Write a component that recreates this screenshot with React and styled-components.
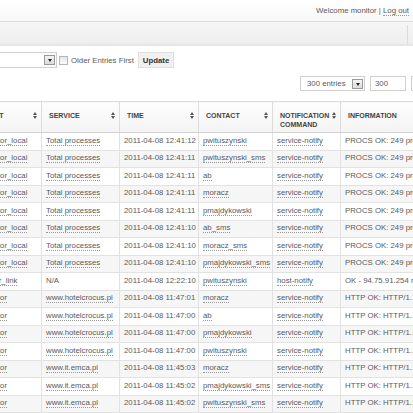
import React from 'react';
import styled, { createGlobalStyle } from 'styled-components';

const GlobalStyle = createGlobalStyle`
    html, body {
        margin: 0;
        padding: 0;
        background: #fff;
        overflow: hidden;
    }
    body {
        font-family: "Liberation Sans", Arial, sans-serif;
        font-size: 7.8px;
        color: #5a5a5a;
    }
`

const Page = styled.div`
    width: 413px;
    height: 413px;
    overflow: hidden;
    display: flex;
    flex-direction: column;
`
const TopBar = styled.div`
    height: 21px;
    flex-shrink: 0;
    display: flex;
    align-items: center;
    justify-content: flex-end;
    padding-right: 4px;
    background: linear-gradient(#fff, #f8f8f8);
    border-bottom: 1px solid #dcdcdc;
`
const NavBar = styled.div`
    height: 22px;
    flex-shrink: 0;
    display: flex;
    justify-content: flex-end;
    background: linear-gradient(#f6f6f6, #eeeeee);
    border-bottom: 2px solid #e6e6e6;
`
const NavDivider = styled.div`
    width: 1px;
    margin: 3px 5px 0 0;
    background: #dcdcdc;
`
const Link = styled.span`
    color: #5a5a5a;
    border-bottom: 1px dotted #999;
    white-space: nowrap;
`
const Row = styled.div`
    display: flex;
    align-items: center;
    flex-shrink: 0;
    height: ${({h}) => h}px;
    margin-top: ${({top}) => top}px;
    justify-content: ${({right}) => (right ? 'flex-end' : 'flex-start')};
    gap: ${({gap}) => gap || 0}px;
`
const SelectBox = styled.div`
    display: flex;
    align-items: center;
    justify-content: space-between;
    box-sizing: border-box;
    width: ${({w}) => w}px;
    height: 100%;
    margin-left: ${({offset}) => offset || 0}px;
    padding: 0 1px 0 6px;
    background: #fff;
    border: 1px solid #cfcfcf;
`
const DropButton = styled.span`
    display: flex;
    align-items: center;
    justify-content: center;
    width: 11px;
    height: 10px;
    box-sizing: border-box;
    background: linear-gradient(#f4f4f4, #dcdcdc);
    border: 1px solid #9a9a9a;
    &::after {
        content: "";
        border-left: 2.5px solid transparent;
        border-right: 2.5px solid transparent;
        border-top: 3px solid #222;
        margin-top: 1px;
    }
`
const CheckBox = styled.span`
    width: 9px;
    height: 9px;
    box-sizing: border-box;
    border: 1px solid #b5b5b5;
    background: linear-gradient(#e8e8e8, #fafafa);
    margin: 0 3px 0 2px;
`
const Label = styled.span`
    color: #5a5a5a;
`
const Button = styled.span`
    display: flex;
    align-items: center;
    box-sizing: border-box;
    height: 100%;
    padding: 0 4px;
    margin-left: 4px;
    background: #f1f1f1;
    border: 1px solid #e0e0e0;
    color: #333;
    font-weight: bold;
    white-space: nowrap;
`
const TextInput = styled.div`
    display: flex;
    align-items: center;
    box-sizing: border-box;
    width: ${({w}) => w}px;
    height: 100%;
    padding-left: 4px;
    background: #fff;
    border: 1px solid #cfcfcf;
`
const TableWrap = styled.div`
    margin: 10px 0 0 -24px;
    flex-shrink: 0;
`
const Table = styled.table`
    table-layout: fixed;
    border-collapse: collapse;
    width: 600px;
`
const Th = styled.th`
    height: 31px;
    box-sizing: border-box;
    padding: 9px 4px 0 7px;
    vertical-align: top;
    text-align: left;
    font-size: 7px;
    font-weight: bold;
    line-height: 9px;
    color: #444;
    background: linear-gradient(#fdfdfd, #f4f4f4);
    border: 1px solid #dcdcdc;
    border-bottom-color: #d4d4d4;
`
const HeadInner = styled.div`
    display: flex;
    justify-content: space-between;
    align-items: flex-start;
`
const Td = styled.td`
    height: 17.5px;
    box-sizing: border-box;
    padding: 0 4px 1px 4px;
    border: 1px solid #e2e2e2;
    white-space: nowrap;
    overflow: hidden;
    line-height: 10px;
`
const Tr = styled.tr`
    background: ${({odd}) => (odd ? '#f6f6f6' : '#fff')};
`

function SortIcon() {
    return (
        <svg width="4" height="7" viewBox="0 0 4 7" style={{ flexShrink: 0, marginTop: 1 }}>
            <path d="M0 3 L2 0 L4 3 Z M0 4 L4 4 L2 7 Z" fill="#555" />
        </svg>
    )
}

const columns = [
    { title: 'HOST', width: 65 },
    { title: 'SERVICE', width: 78 },
    { title: 'TIME', width: 79 },
    { title: 'CONTACT', width: 74 },
    { title: ['NOTIFICATION', 'COMMAND'], width: 68 },
    { title: 'INFORMATION', width: 236, noSort: true },
]

const procs = 'PROCS OK: 249 processes'
const http = 'HTTP OK: HTTP/1.1 200 OK - 0.412 second response time'

const rows = [
    ['monitor_local', 'Total processes', '2011-04-08 12:41:12', 'pwituszynski', 'service-notify', procs],
    ['monitor_local', 'Total processes', '2011-04-08 12:41:11', 'pwituszynski_sms', 'service-notify', procs],
    ['monitor_local', 'Total processes', '2011-04-08 12:41:11', 'ab', 'service-notify', procs],
    ['monitor_local', 'Total processes', '2011-04-08 12:41:11', 'moracz', 'service-notify', procs],
    ['monitor_local', 'Total processes', '2011-04-08 12:41:11', 'pmajdykowski', 'service-notify', procs],
    ['monitor_local', 'Total processes', '2011-04-08 12:41:10', 'ab_sms', 'service-notify', procs],
    ['monitor_local', 'Total processes', '2011-04-08 12:41:10', 'moracz_sms', 'service-notify', procs],
    ['monitor_local', 'Total processes', '2011-04-08 12:41:10', 'pmajdykowski_sms', 'service-notify', procs],
    ['router_link', null, '2011-04-08 12:22:10', 'pwituszynski', 'host-notify', 'OK - 94.75.91.254 responds to ICMP'],
    ['monitor', 'www.hotelcrocus.pl', '2011-04-08 11:47:01', 'moracz', 'service-notify', http],
    ['monitor', 'www.hotelcrocus.pl', '2011-04-08 11:47:00', 'ab', 'service-notify', http],
    ['monitor', 'www.hotelcrocus.pl', '2011-04-08 11:47:00', 'pmajdykowski', 'service-notify', http],
    ['monitor', 'www.hotelcrocus.pl', '2011-04-08 11:47:00', 'pwituszynski', 'service-notify', http],
    ['monitor', 'www.it.emca.pl', '2011-04-08 11:45:03', 'moracz', 'service-notify', http],
    ['monitor', 'www.it.emca.pl', '2011-04-08 11:45:02', 'pmajdykowski_sms', 'service-notify', http],
    ['monitor', 'www.it.emca.pl', '2011-04-08 11:45:02', 'pwituszynski_sms', 'service-notify', http],
]

export default function App() {
    return (
        <>
            <GlobalStyle />
            <Page>
                <TopBar>
                    <Label>Welcome monitor |&nbsp;</Label>
                    <Link>Log out</Link>
                </TopBar>
                <NavBar>
                    <NavDivider />
                </NavBar>

                <Row h={16} top={6}>
                    <SelectBox w={100} offset={-43}>
                        <span />
                        <DropButton />
                    </SelectBox>
                    <CheckBox />
                    <Label>Older Entries First</Label>
                    <Button>Update</Button>
                </Row>

                <Row h={15} top={8} right gap={5} style={{ marginRight: -13 }}>
                    <SelectBox w={65}>
                        <span>300 entries</span>
                        <DropButton />
                    </SelectBox>
                    <TextInput w={36}>300</TextInput>
                    <TextInput w={15} />
                </Row>

                <TableWrap>
                    <Table>
                        <colgroup>
                            {columns.map((c, i) => <col key={i} style={{ width: c.width }} />)}
                        </colgroup>
                        <thead>
                            <tr>
                                {columns.map((c, i) => (
                                    <Th key={i}>
                                        <HeadInner>
                                            <span>
                                                {Array.isArray(c.title)
                                                    ? <>{c.title[0]}<br />{c.title[1]}</>
                                                    : c.title}
                                            </span>
                                            {!c.noSort && <SortIcon />}
                                        </HeadInner>
                                    </Th>
                                ))}
                            </tr>
                        </thead>
                        <tbody>
                            {rows.map((r, i) => (
                                <Tr key={i} odd={i % 2 === 1 ? 1 : 0}>
                                    <Td><Link>{r[0]}</Link></Td>
                                    <Td>{r[1] ? <Link>{r[1]}</Link> : 'N/A'}</Td>
                                    <Td>{r[2]}</Td>
                                    <Td><Link>{r[3]}</Link></Td>
                                    <Td><Link>{r[4]}</Link></Td>
                                    <Td>{r[5]}</Td>
                                </Tr>
                            ))}
                        </tbody>
                    </Table>
                </TableWrap>
            </Page>
        </>
    )
}
